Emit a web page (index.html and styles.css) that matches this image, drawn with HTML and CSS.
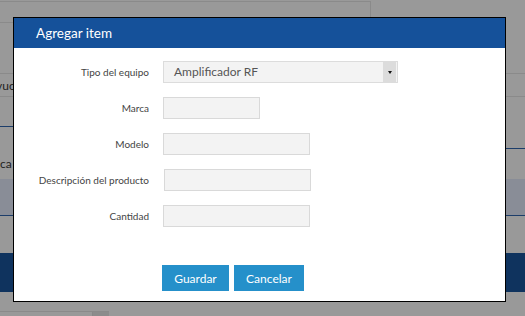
FILE: index.html
```html
<!DOCTYPE html>
<html lang="es">
    <head>
        <meta charset="UTF-8">
        <title>Agregar item</title>
        <link rel="stylesheet" href="styles.css">
    </head>
    <body>
        <div class="fondo">
            <div class="panel-superior">
                <div class="panel-fila"></div>
            </div>
            <div class="fila-gris fila-a"></div>
            <div class="fila-gris fila-b"><span>vuc</span></div>
            <div class="linea-azul izq"></div>
            <div class="linea-azul der"></div>
            <div class="fila-texto"><span>ca</span></div>
            <div class="banda-clara"></div>
            <div class="banda-oscura"></div>
            <div class="barra-inferior"><span class="barra-boton"></span></div>
        </div>

        <div class="modal">
            <div class="modal-header">Agregar item</div>
            <form class="modal-body" action="/agregar_item/" method="GET">
                <div class="form-row">
                    <label>Tipo del equipo</label>
                    <div class="select-box">
                        <span class="select-valor">Amplificador RF</span>
                        <span class="select-flecha"></span>
                    </div>
                </div>
                <div class="form-row">
                    <label for="marca">Marca</label>
                    <input type="text" id="marca" name="marca" class="input-corto">
                </div>
                <div class="form-row">
                    <label for="modelo">Modelo</label>
                    <input type="text" id="modelo" name="modelo">
                </div>
                <div class="form-row">
                    <label for="descripcion">Descripción del producto</label>
                    <input type="text" id="descripcion" name="descripcion" class="input-desc">
                </div>
                <div class="form-row">
                    <label for="cantidad">Cantidad</label>
                    <input type="text" id="cantidad" name="cantidad">
                </div>
                <div class="botones">
                    <button type="submit" class="btn-guardar">Guardar</button>
                    <button type="button" class="btn-cancelar">Cancelar</button>
                </div>
            </form>
        </div>
    </body>
</html>
```

FILE: styles.css
```css
body {
    margin: 0;
    font-family: Lato, "Open Sans", sans-serif;
}
.fondo {
    position: relative;
    width: 525px;
    height: 316px;
    background-color: #999;
    overflow: hidden;
}
.panel-superior {
    margin-top: 1px;
    width: 370px;
    height: 36px;
    border-top: 1px solid #8a8a8a;
    border-right: 1px solid #8a8a8a;
}
.panel-fila {
    height: 20px;
    border-bottom: 1px solid #8a8a8a;
}
.fila-gris {
    border-bottom: 1px solid #8a8a8a;
}
.fila-a {
    height: 35px;
}
.fila-b {
    height: 22px;
    font-size: 12px;
    color: #222;
    line-height: 24px;
    white-space: nowrap;
}
.fila-b span {
    margin-left: -4px;
}
.linea-azul {
    width: 260px;
    height: 1px;
    background-color: #1c3d6a;
}
.linea-azul.izq {
    margin-top: 29px;
}
.linea-azul.der {
    margin-top: 21px;
    margin-left: 260px;
    width: 265px;
}
.fila-texto {
    height: 30px;
    font-size: 12px;
    color: #222;
    line-height: 30px;
}
.banda-clara {
    height: 36px;
    background-color: #898d97;
    border-bottom: 1px solid #1c3d6a;
}
.banda-oscura {
    margin-top: 37px;
    height: 39px;
    background-color: #0f335e;
}
.barra-inferior {
    margin-top: 19px;
    width: 109px;
    height: 4px;
    border-top: 1px solid #8a8a8a;
    display: flex;
    justify-content: flex-end;
}
.barra-boton {
    width: 16px;
    background-color: #8c8c8c;
    border-left: 1px solid #888;
}

.modal {
    position: absolute;
    left: 13px;
    top: 17px;
    width: 491px;
    height: 283px;
    background-color: #fff;
    border: 1px solid #000;
}
.modal-header {
    height: 30px;
    line-height: 30px;
    padding-left: 22px;
    background-color: #15519a;
    color: #fff;
    font-size: 13.5px;
}
.modal-body {
    display: flex;
    flex-direction: column;
    gap: 14px;
    padding-top: 13px;
}
.form-row {
    display: flex;
    align-items: center;
    gap: 14px;
    height: 22px;
}
.form-row label {
    width: 135px;
    text-align: right;
    font-size: 10px;
    color: #444;
}
.form-row input {
    box-sizing: border-box;
    width: 147px;
    height: 22px;
    margin: 0;
    padding: 0 6px;
    background-color: #f3f3f3;
    border: 1px solid #d9d9d9;
    border-radius: 0;
}
.form-row .input-corto {
    width: 97px;
}
.form-row .input-desc {
    margin-left: 1px;
}
.select-box {
    box-sizing: border-box;
    display: flex;
    width: 235px;
    height: 22px;
    background-color: #f3f3f3;
    border: 1px solid #dcdcdc;
}
.select-valor {
    flex: 1;
    padding-left: 10px;
    font-size: 12px;
    line-height: 20px;
    color: #555;
}
.select-flecha {
    width: 13px;
    margin-right: 1px;
    background-color: #dcdcdc;
    position: relative;
}
.select-flecha::after {
    content: "";
    position: absolute;
    left: 5px;
    top: 9px;
    border-left: 2px solid transparent;
    border-right: 2px solid transparent;
    border-top: 3px solid #111;
}
.botones {
    display: flex;
    gap: 5px;
    margin-top: 24px;
    padding-left: 148px;
}
.botones button {
    height: 26px;
    border: none;
    border-radius: 0;
    background-color: #2590ca;
    color: #fff;
    font-family: Lato, "Open Sans", sans-serif;
    font-size: 12px;
    padding: 0;
    cursor: pointer;
}
.btn-guardar {
    width: 67px;
}
.btn-cancelar {
    width: 70px;
}
```
